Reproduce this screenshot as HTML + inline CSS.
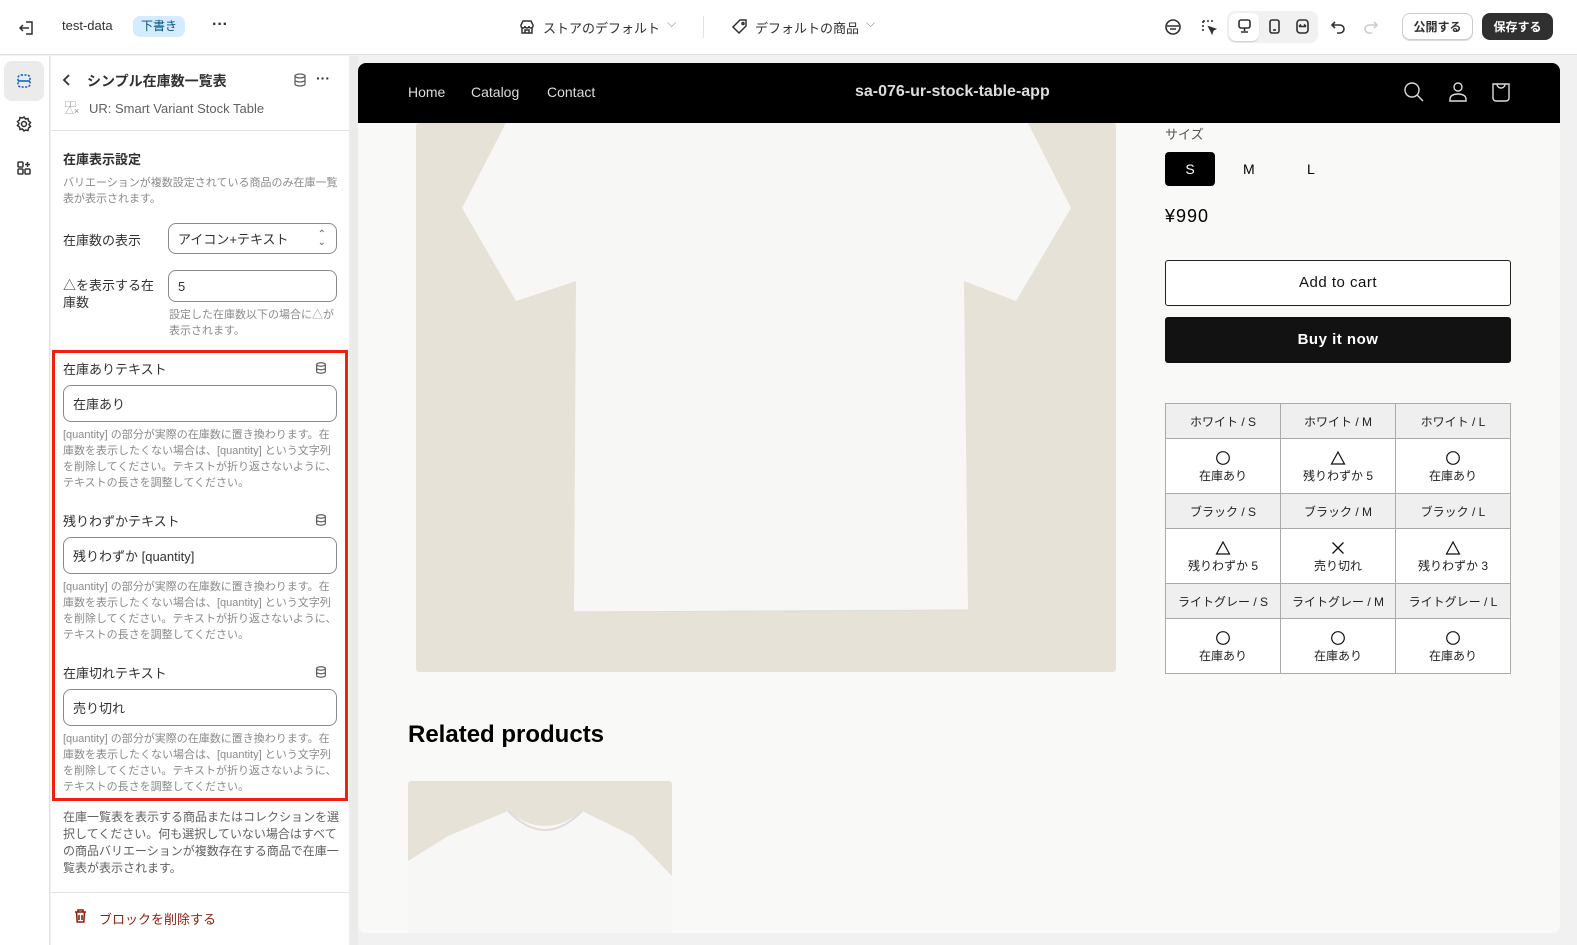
<!DOCTYPE html>
<html><head><meta charset="utf-8"><style>
*{box-sizing:border-box;margin:0;padding:0}
body{width:1577px;height:945px;overflow:hidden;background:#f1f1f1;font-family:"Liberation Sans","Noto Sans CJK JP",sans-serif;color:#303030;position:relative}
.a{position:absolute}
.top{left:0;top:0;width:1577px;height:55px;background:#fff;border-bottom:1px solid #e3e3e3}
.t13{font-size:13px}
.small{font-size:11px;color:#8a8a8a;line-height:16px}
.inp{position:absolute;border:1px solid #8a8a8a;border-radius:8px;background:#fff;font-size:13px;padding-left:9px;display:flex;align-items:center}
.btn{position:absolute;border-radius:8px;font-size:12px;font-weight:bold;display:flex;align-items:center;justify-content:center}
table{border-collapse:collapse;position:absolute;left:1165px;top:403px;width:346px}
td{border:1px solid #aaa;text-align:center;font-size:12px;color:#222;width:115px}
tr.h td{background:#efefef;height:35px}
tr.v td{background:#fff;height:55px;line-height:17px;padding-top:2px}
td svg{display:block;margin:0 auto 2px}
</style></head><body>
<svg width="0" height="0" style="position:absolute"><defs>
<symbol id="o" viewBox="0 0 16 16"><circle cx="8" cy="8" r="6.3" fill="none" stroke="#111" stroke-width="1.2"/></symbol>
<symbol id="t" viewBox="0 0 16 16"><path d="M8 2L14.5 14H1.5Z" fill="none" stroke="#111" stroke-width="1.2"/></symbol>
<symbol id="x" viewBox="0 0 16 16"><path d="M2.5 2.5L13.5 13.5M13.5 2.5L2.5 13.5" fill="none" stroke="#111" stroke-width="1.3"/></symbol>
</defs></svg>
<div class="a top"></div>
<svg class="a" style="left:17px;top:18px" width="20" height="20" viewBox="0 0 20 20" fill="none" stroke="#303030" stroke-width="1.5"><path d="M9 4h6v12h-6M12 10H3M6 7l-3 3 3 3"/></svg>
<div class="a t13" style="left:62px;top:18px;color:#303030">test-data</div>
<div class="a" style="left:133px;top:16px;width:52px;height:21px;background:#d5ebff;border-radius:7px;font-size:12px;color:#00527c;text-align:center;line-height:21px">下書き</div>
<div class="a" style="left:212px;top:16px;font-size:16px;font-weight:bold">···</div>
<svg class="a" style="left:518px;top:18px" width="18" height="18" viewBox="0 0 18 18" fill="none" stroke="#303030" stroke-width="1.5"><path d="M3 7l2-4h8l2 4v1a2 2 0 01-4 0 2 2 0 01-4 0 2 2 0 01-4 0zM4 9v6h10V9M7 15v-3h4v3"/></svg>
<div class="a t13" style="left:543px;top:18px">ストアのデフォルト</div>
<div class="a" style="left:667px;top:16px;color:#8a8a8a;font-size:12px">⌵</div>
<div class="a" style="left:703px;top:16px;width:1px;height:22px;background:#e3e3e3"></div>
<svg class="a" style="left:731px;top:18px" width="18" height="18" viewBox="0 0 18 18" fill="none" stroke="#303030" stroke-width="1.5"><path d="M9 2h6v6l-7 7-6-6z"/><circle cx="12" cy="5.5" r="1"/></svg>
<div class="a t13" style="left:755px;top:18px">デフォルトの商品</div>
<div class="a" style="left:866px;top:16px;color:#8a8a8a;font-size:12px">⌵</div>
<svg class="a" style="left:1164px;top:18px" width="18" height="18" viewBox="0 0 18 18" fill="none" stroke="#303030" stroke-width="1.6"><circle cx="9" cy="9" r="7"/><path d="M3 8h12M6 11h6"/></svg>
<svg class="a" style="left:1200px;top:18px" width="18" height="18" viewBox="0 0 18 18" fill="none" stroke="#303030" stroke-width="1.6" stroke-dasharray="2 2"><path d="M3 3h10M3 3v10"/><path d="M9 9l6 2-2 1-1 3z" fill="#303030" stroke-dasharray="0"/></svg>
<div class="a" style="left:1227px;top:11px;width:91px;height:32px;background:#f1f1f1;border-radius:8px"></div>
<div class="a" style="left:1229px;top:13px;width:30px;height:28px;background:#fff;border-radius:7px;box-shadow:0 1px 1px #ccc"></div>
<svg class="a" style="left:1236px;top:18px" width="17" height="17" viewBox="0 0 17 17" fill="none" stroke="#303030" stroke-width="1.6"><rect x="3" y="2" width="11" height="8" rx="2"/><path d="M8.5 10v3M5 14h7"/></svg>
<svg class="a" style="left:1266px;top:18px" width="17" height="17" viewBox="0 0 17 17" fill="none" stroke="#303030" stroke-width="1.6"><rect x="4" y="2" width="9" height="13" rx="2"/><path d="M7 12h3"/></svg>
<svg class="a" style="left:1294px;top:18px" width="17" height="17" viewBox="0 0 17 17" fill="none" stroke="#303030" stroke-width="1.6"><rect x="3" y="2" width="11" height="13" rx="3"/><path d="M5 8.5h7M5 8.5l2-2M12 8.5l-2-2"/></svg>
<svg class="a" style="left:1330px;top:18px" width="17" height="17" viewBox="0 0 17 17" fill="none" stroke="#303030" stroke-width="1.6"><path d="M5 4L2 7l3 3M2 7h8a4 4 0 010 8H7"/></svg>
<svg class="a" style="left:1362px;top:18px" width="17" height="17" viewBox="0 0 17 17" fill="none" stroke="#ccc" stroke-width="1.6"><path d="M12 4l3 3-3 3M15 7H7a4 4 0 000 8h3"/></svg>
<div class="btn" style="left:1402px;top:13px;width:71px;height:27px;border:1px solid #ccc;background:#fff;color:#303030;box-shadow:0 1px 0 #ddd">公開する</div>
<div class="btn" style="left:1482px;top:13px;width:71px;height:27px;background:#303030;color:#fff">保存する</div>

<div class="a" style="left:0;top:56px;width:50px;height:889px;background:#fff;border-right:1px solid #e3e3e3"></div>
<div class="a" style="left:4px;top:61px;width:40px;height:40px;background:#ebebeb;border-radius:8px"></div>
<svg class="a" style="left:15px;top:72px" width="18" height="18" viewBox="0 0 18 18" fill="none" stroke="#005bd3" stroke-width="1.5"><rect x="3" y="3" width="12" height="12" rx="3" stroke-dasharray="2 1.5"/><path d="M3 9h12"/></svg>
<svg class="a" style="left:15px;top:115px" width="18" height="18" viewBox="0 0 18 18" fill="none" stroke="#303030" stroke-width="1.5"><circle cx="9" cy="9" r="2.5"/><path d="M9 2l1.5 2 2.5-.5.5 2.5 2 1.5-1.5 2 1.5 2-2 1.5-.5 2.5-2.5-.5L9 16l-1.5-2-2.5.5-.5-2.5-2-1.5 1.5-2-1.5-2 2-1.5.5-2.5 2.5.5z"/></svg>
<svg class="a" style="left:15px;top:159px" width="18" height="18" viewBox="0 0 18 18" fill="none" stroke="#303030" stroke-width="1.5"><rect x="3" y="3" width="5" height="5" rx="1"/><rect x="3" y="10" width="5" height="5" rx="1"/><rect x="10" y="10" width="5" height="5" rx="1"/><path d="M12.5 3v5M10 5.5h5"/></svg>

<div class="a" style="left:51px;top:56px;width:298px;height:889px;background:#fff"></div>
<div class="a" style="left:349px;top:56px;width:9px;height:889px;background:#ebebeb"></div>
<svg class="a" style="left:62px;top:74px" width="10" height="12" viewBox="0 0 10 12" fill="none" stroke="#303030" stroke-width="1.8"><path d="M7 1L2 6l5 5"/></svg>
<div class="a" style="left:87px;top:71px;font-size:14px;font-weight:bold;color:#303030">シンプル在庫数一覧表</div>
<svg class="a" style="left:292px;top:72px" width="16" height="16" viewBox="0 0 16 16" fill="none" stroke="#616161" stroke-width="1.3"><ellipse cx="8" cy="4" rx="5" ry="2"/><path d="M3 4v8c0 1.1 2.2 2 5 2s5-.9 5-2V4M3 8c0 1.1 2.2 2 5 2s5-.9 5-2"/></svg>
<div class="a" style="left:316px;top:70px;font-size:14px;font-weight:bold">···</div>
<div class="a" style="left:65px;top:101px;font-size:9px;color:#888;line-height:7px">□□<br>△×</div>
<div class="a t13" style="left:89px;top:101px;color:#616161">UR: Smart Variant Stock Table</div>
<div class="a" style="left:51px;top:130px;width:298px;height:1px;background:#e3e3e3"></div>
<div class="a" style="left:63px;top:149px;font-size:13px;font-weight:bold">在庫表示設定</div>
<div class="a small" style="left:63px;top:175px;width:280px">バリエーションが複数設定されている商品のみ在庫一覧表が表示されます。</div>
<div class="a t13" style="left:63px;top:230px">在庫数の表示</div>
<div class="inp" style="left:168px;top:223px;width:169px;height:31px">アイコン+テキスト<span style="position:absolute;right:10px;color:#616161;font-size:10px;line-height:8px">⌃<br>⌄</span></div>
<div class="a t13" style="left:63px;top:277px;width:100px;line-height:17px">△を表示する在庫数</div>
<div class="inp" style="left:168px;top:270px;width:169px;height:32px">5</div>
<div class="a small" style="left:169px;top:307px;width:170px">設定した在庫数以下の場合に△が表示されます。</div>

<div class="a" style="left:52px;top:350px;width:296px;height:451px;border:3px solid #f2200a"></div>
<div class="a t13" style="left:63px;top:359px">在庫ありテキスト</div>
<svg class="a" style="left:314px;top:361px" width="14" height="14" viewBox="0 0 16 16" fill="none" stroke="#616161" stroke-width="1.4"><ellipse cx="8" cy="4" rx="5" ry="2"/><path d="M3 4v8c0 1.1 2.2 2 5 2s5-.9 5-2V4M3 8c0 1.1 2.2 2 5 2s5-.9 5-2"/></svg>
<div class="inp" style="left:63px;top:385px;width:274px;height:37px">在庫あり</div>
<div class="a small" style="left:63px;top:427px;width:276px">[quantity] の部分が実際の在庫数に置き換わります。在庫数を表示したくない場合は、[quantity] という文字列を削除してください。テキストが折り返さないように、テキストの長さを調整してください。</div>
<div class="a t13" style="left:63px;top:511px">残りわずかテキスト</div>
<svg class="a" style="left:314px;top:513px" width="14" height="14" viewBox="0 0 16 16" fill="none" stroke="#616161" stroke-width="1.4"><ellipse cx="8" cy="4" rx="5" ry="2"/><path d="M3 4v8c0 1.1 2.2 2 5 2s5-.9 5-2V4M3 8c0 1.1 2.2 2 5 2s5-.9 5-2"/></svg>
<div class="inp" style="left:63px;top:537px;width:274px;height:37px">残りわずか [quantity]</div>
<div class="a small" style="left:63px;top:579px;width:276px">[quantity] の部分が実際の在庫数に置き換わります。在庫数を表示したくない場合は、[quantity] という文字列を削除してください。テキストが折り返さないように、テキストの長さを調整してください。</div>
<div class="a t13" style="left:63px;top:663px">在庫切れテキスト</div>
<svg class="a" style="left:314px;top:665px" width="14" height="14" viewBox="0 0 16 16" fill="none" stroke="#616161" stroke-width="1.4"><ellipse cx="8" cy="4" rx="5" ry="2"/><path d="M3 4v8c0 1.1 2.2 2 5 2s5-.9 5-2V4M3 8c0 1.1 2.2 2 5 2s5-.9 5-2"/></svg>
<div class="inp" style="left:63px;top:689px;width:274px;height:37px">売り切れ</div>
<div class="a small" style="left:63px;top:731px;width:276px">[quantity] の部分が実際の在庫数に置き換わります。在庫数を表示したくない場合は、[quantity] という文字列を削除してください。テキストが折り返さないように、テキストの長さを調整してください。</div>
<div class="a" style="left:63px;top:809px;width:280px;font-size:12px;color:#616161;line-height:17px">在庫一覧表を表示する商品またはコレクションを選択してください。何も選択していない場合はすべての商品バリエーションが複数存在する商品で在庫一覧表が表示されます。</div>
<div class="a" style="left:51px;top:892px;width:298px;height:1px;background:#e3e3e3"></div>
<svg class="a" style="left:73px;top:908px" width="15" height="16" viewBox="0 0 15 16" fill="none" stroke="#8e1f0b" stroke-width="1.6"><path d="M2 4h11M5 4V2h5v2M3.5 4l.7 10h6.6l.7-10M6 7v5M9 7v5"/></svg>
<div class="a t13" style="left:99px;top:909px;color:#8e1f0b">ブロックを削除する</div>

<div class="a" style="left:358px;top:63px;width:1202px;height:870px;background:#f9f9f7;border-radius:8px;overflow:hidden">
 <div class="a" style="left:0;top:0;width:1202px;height:60px;background:#000"></div>
 <div class="a" style="left:50px;top:21px;color:#ddd;font-size:14px">Home</div>
 <div class="a" style="left:113px;top:21px;color:#ddd;font-size:14px">Catalog</div>
 <div class="a" style="left:189px;top:21px;color:#ddd;font-size:14px">Contact</div>
 <div class="a" style="left:497px;top:20px;color:#ddd;font-size:16px;font-weight:bold">sa-076-ur-stock-table-app</div>
 <svg class="a" style="left:1045px;top:18px" width="22" height="22" viewBox="0 0 22 22" fill="none" stroke="#ddd" stroke-width="1.4"><circle cx="9" cy="9" r="7"/><path d="M14 14l6 6"/></svg>
 <svg class="a" style="left:1089px;top:18px" width="22" height="22" viewBox="0 0 22 22" fill="none" stroke="#ddd" stroke-width="1.4"><circle cx="11" cy="6" r="4"/><path d="M3 20v-2c0-3 3-5 8-5s8 2 8 5v2z"/></svg>
 <svg class="a" style="left:1132px;top:18px" width="22" height="22" viewBox="0 0 22 22" fill="none" stroke="#ddd" stroke-width="1.4"><path d="M3 3h16v14a3 3 0 01-3 3H6a3 3 0 01-3-3zM7 3a4 4 0 008 0"/></svg>
 <svg class="a" style="left:58px;top:60px" width="700" height="549" viewBox="0 0 700 549"><rect width="700" height="549" fill="#e6e2d7" rx="3"/><path d="M90,0 L612,0 L655,85 L600,178 L548,158 L552,487 L158,489 L160,158 L100,178 L46,85 Z" fill="#f7f7f5"/><path d="M158 489 L552 487" stroke="#ddd"/></svg>
 <svg class="a" style="left:50px;top:718px" width="264" height="160" viewBox="0 0 264 160"><rect width="264" height="160" fill="#e6e2d7" rx="3"/><path d="M0,120 L0,80 L40,55 L100,30 Q137,60 174,30 L225,55 L264,95 L264,160 L0,160Z" fill="#f7f7f5"/><path d="M100 30 Q137 68 174 30" fill="none" stroke="#ddd" stroke-width="2"/></svg>
 <div class="a" style="left:50px;top:658px;font-size:24px;font-weight:bold;color:#000">Related products</div>
</div>
<div class="a" style="left:1165px;top:124px;font-size:13px;color:#555">サイズ</div>
<div class="a" style="left:1165px;top:152px;width:50px;height:34px;background:#000;border-radius:4px;color:#fff;font-size:14px;text-align:center;line-height:34px">S</div>
<div class="a" style="left:1243px;top:161px;font-size:14px;color:#000">M</div>
<div class="a" style="left:1307px;top:161px;font-size:14px;color:#000">L</div>
<div class="a" style="left:1165px;top:206px;font-size:18px;color:#000;letter-spacing:1px">¥990</div>
<div class="a" style="left:1165px;top:260px;width:346px;height:46px;border:1px solid #222;border-radius:3px;background:#fff;font-size:15px;text-align:center;line-height:44px;color:#111;letter-spacing:.5px">Add to cart</div>
<div class="a" style="left:1165px;top:317px;width:346px;height:46px;background:#121212;border-radius:3px;font-size:15px;text-align:center;line-height:46px;color:#fff;font-weight:bold;letter-spacing:.5px">Buy it now</div>
<table>
<tr class="h"><td>ホワイト / S</td><td>ホワイト / M</td><td>ホワイト / L</td></tr>
<tr class="v"><td><svg width="16" height="16"><use href="#o"/></svg>在庫あり</td><td><svg width="16" height="16"><use href="#t"/></svg>残りわずか 5</td><td><svg width="16" height="16"><use href="#o"/></svg>在庫あり</td></tr>
<tr class="h"><td>ブラック / S</td><td>ブラック / M</td><td>ブラック / L</td></tr>
<tr class="v"><td><svg width="16" height="16"><use href="#t"/></svg>残りわずか 5</td><td><svg width="16" height="16"><use href="#x"/></svg>売り切れ</td><td><svg width="16" height="16"><use href="#t"/></svg>残りわずか 3</td></tr>
<tr class="h"><td>ライトグレー / S</td><td>ライトグレー / M</td><td>ライトグレー / L</td></tr>
<tr class="v"><td><svg width="16" height="16"><use href="#o"/></svg>在庫あり</td><td><svg width="16" height="16"><use href="#o"/></svg>在庫あり</td><td><svg width="16" height="16"><use href="#o"/></svg>在庫あり</td></tr>
</table>
</body></html>
